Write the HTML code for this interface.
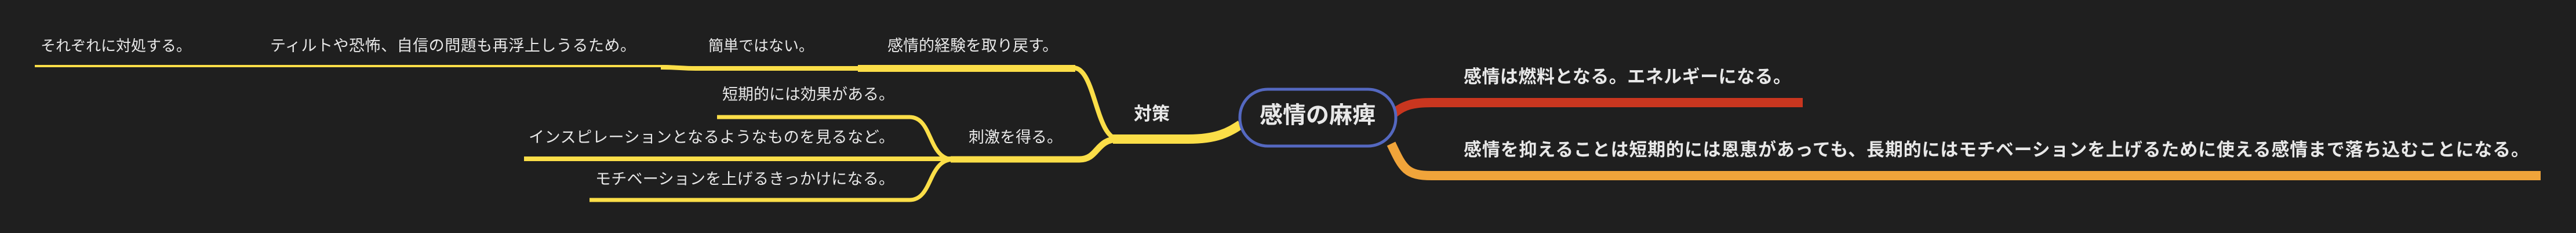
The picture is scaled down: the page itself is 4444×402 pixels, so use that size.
<!DOCTYPE html>
<html><head><meta charset="utf-8"><style>
html,body{margin:0;padding:0;background:#1f1f1f;width:4444px;height:402px;overflow:hidden}
svg{display:block}
text{font-family:"Liberation Sans","Noto Sans CJK JP",sans-serif;fill:#e8e8e8}
</style></head><body>
<svg width="4444" height="402" viewBox="0 0 4444 402" xmlns="http://www.w3.org/2000/svg">
<rect width="4444" height="402" fill="#1f1f1f"/>
<g fill="none" stroke="#fbde48" stroke-linecap="butt">
<path d="M60 114 L1140 114 C1170 114 1175 117 1200 117 L1440 117" stroke-width="4"/>
<path d="M1140 116 C1170 116 1175 118 1200 118 L1440 118 C1470 118 1470 118 1500 118 L1855 118" stroke-width="8"/>
<path d="M1480 118 L1855 118" stroke-width="12"/>
<path d="M1852 117 C1890 117 1890 240 1930 240" stroke-width="8"/>
<path d="M1920 240 L2050 240 C2100 240 2120 228 2140 215" stroke-width="16"/>
<path d="M1930 240 C1890 240 1895 275 1862 275 L1640 275" stroke-width="11"/>
<path d="M1640 274 L904 274" stroke-width="8"/>
<path d="M1645 275 C1600 275 1610 202 1569 202 L1237 202" stroke-width="7"/>
<path d="M1645 275 C1600 275 1610 345 1569 345 L1017 345" stroke-width="7"/>
</g>
<path d="M2400 200 C2420 180 2440 177 2470 177 L3110 177" fill="none" stroke="#c9361f" stroke-width="16"/>
<path d="M2400 248 C2420 290 2425 303 2470 303 L4383 303" fill="none" stroke="#f0a43a" stroke-width="16"/>
<rect x="2139" y="154" width="269" height="98" rx="48" ry="48" fill="#1f1f1f" stroke="#5468c0" stroke-width="5"/>
<text x="2273" y="212" font-size="40" font-weight="bold" text-anchor="middle">感情の麻痺</text>
<text x="1987" y="207" font-size="31" font-weight="bold" text-anchor="middle">対策</text>
<text x="70" y="88" font-size="26">それぞれに対処する。</text>
<text x="466" y="88" font-size="27" textLength="631">ティルトや恐怖、自信の問題も再浮上しうるため。</text>
<text x="1222" y="88" font-size="26">簡単ではない。</text>
<text x="1531" y="88" font-size="27">感情的経験を取り戻す。</text>
<text x="1246" y="172" font-size="27">短期的には効果がある。</text>
<text x="912" y="246" font-size="27" textLength="631">インスピレーションとなるようなものを見るなど。</text>
<text x="1671" y="246" font-size="27">刺激を得る。</text>
<text x="1027" y="318" font-size="27" textLength="516">モチベーションを上げるきっかけになる。</text>
<text x="2525" y="143" font-size="31" font-weight="bold" textLength="565">感情は燃料となる。エネルギーになる。</text>
<text x="2525" y="269" font-size="31" font-weight="bold" textLength="1838">感情を抑えることは短期的には恩恵があっても、長期的にはモチベーションを上げるために使える感情まで落ち込むことになる。</text>
</svg>
</body></html>
